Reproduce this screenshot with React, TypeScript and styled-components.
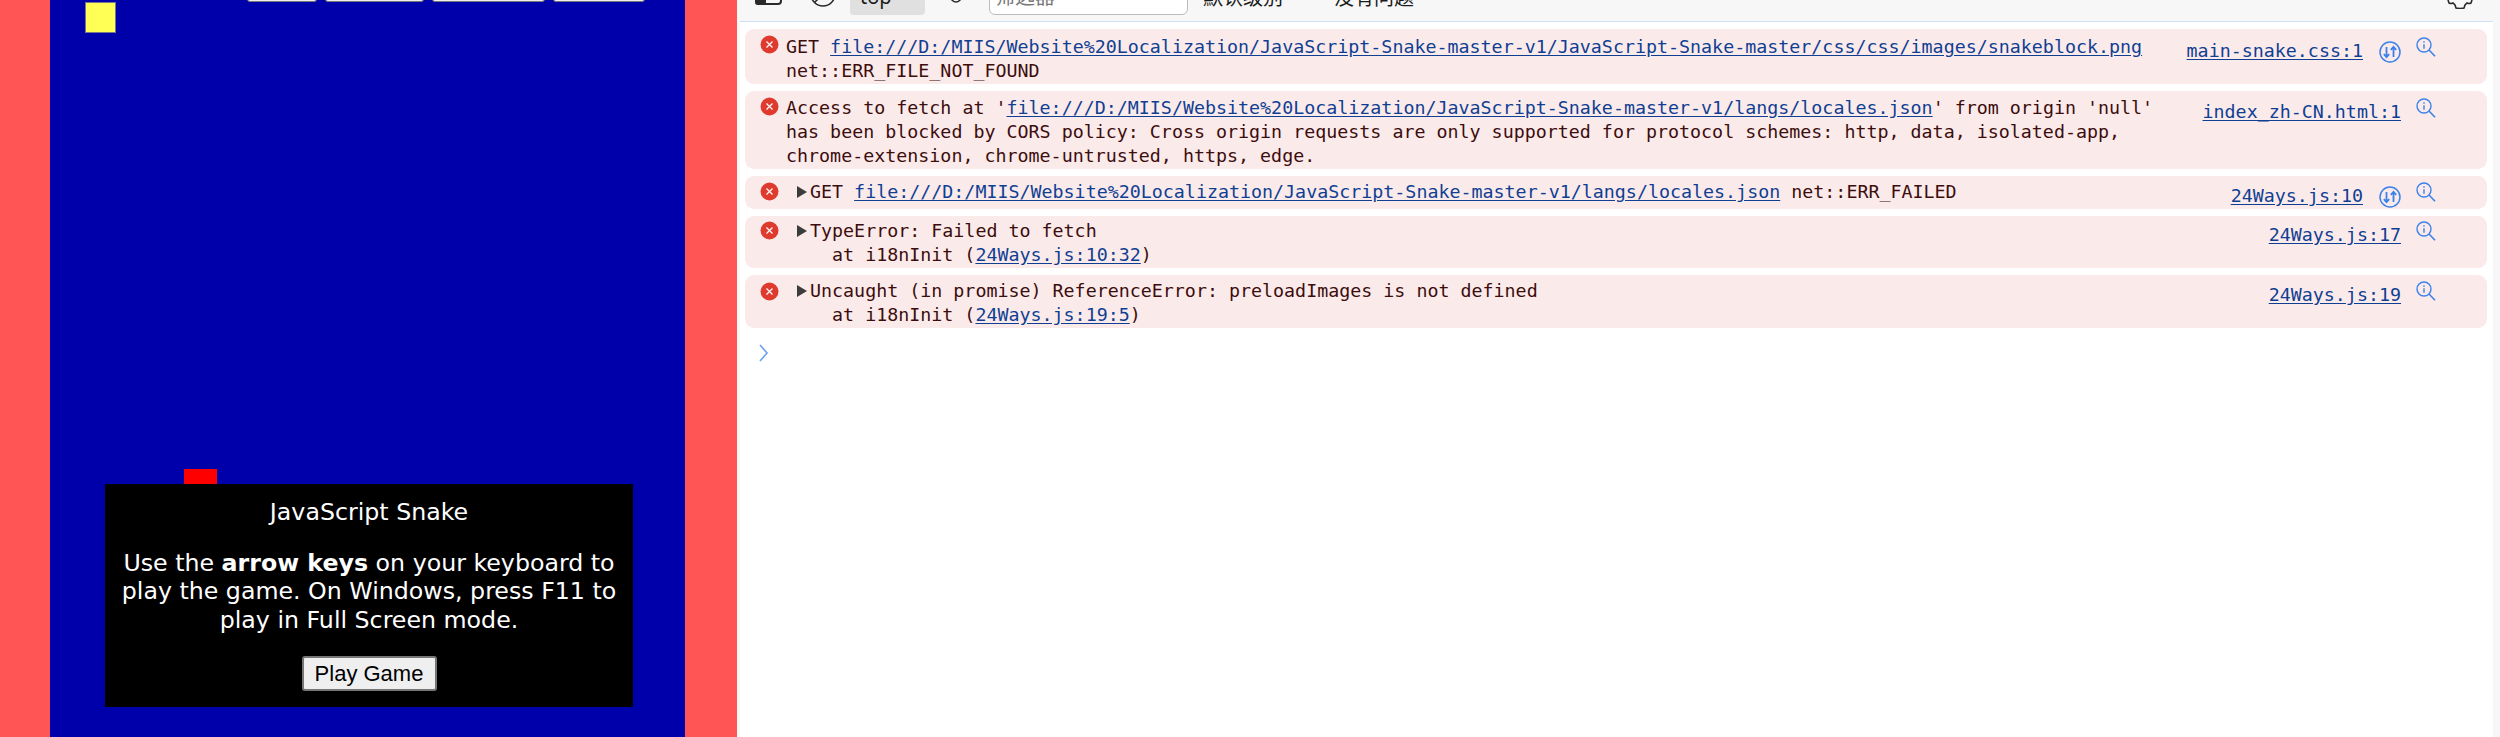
import React from "react";
import styled, { createGlobalStyle } from "styled-components";

const GlobalStyle = createGlobalStyle`
  html, body {
    margin: 0;
    padding: 0;
    background: #ffffff;
  }
`;

const Page = styled.div`
  display: flex;
  width: 2500px;
  height: 737px;
  overflow: hidden;
`;

const GamePane = styled.div`
  flex: none;
  box-sizing: border-box;
  width: 737px;
  height: 100%;
  padding: 0 52px 0 50px;
  background: #ff5555;
`;

const Playfield = styled.div`
  position: relative;
  height: 100%;
  background: #0000aa;
`;

const MenuBar = styled.div`
  display: flex;
  align-items: flex-end;
  gap: 8px;
  height: 2px;
  padding-left: 197px;
  overflow: hidden;
`;

const MenuButton = styled.div<{ $width: number }>`
  flex: none;
  box-sizing: border-box;
  width: ${(p) => p.$width}px;
  height: 30px;
  border: 1px solid #767676;
  border-radius: 3px;
  background: #efefef;
`;

const Block = styled.div<{ $x: number; $y: number; $w: number; $h: number; $color: string; $border?: boolean }>`
  position: absolute;
  box-sizing: border-box;
  left: ${(p) => p.$x}px;
  top: ${(p) => p.$y}px;
  width: ${(p) => p.$w}px;
  height: ${(p) => p.$h}px;
  background: ${(p) => p.$color};
  border: ${(p) => (p.$border ? "1px solid #77778a" : "none")};
`;

const WelcomeBox = styled.div`
  position: absolute;
  left: 55px;
  top: 484px;
  box-sizing: border-box;
  width: 528px;
  height: 223px;
  padding-top: 14px;
  background: #000000;
  color: #ffffff;
  font-family: "DejaVu Sans", Verdana, sans-serif;
  font-size: 23.7px;
  line-height: 28.5px;
  text-align: center;
`;

const WelcomeTitle = styled.div`
  margin-bottom: 22px;
`;

const WelcomeText = styled.div`
  margin-bottom: 22px;
`;

const PlayButton = styled.button`
  box-sizing: border-box;
  width: 135px;
  height: 35px;
  padding: 0;
  border: 2px solid #767676;
  border-radius: 3px;
  background: #efefef;
  color: #000000;
  font-family: "Liberation Sans", Arial, sans-serif;
  font-size: 22px;
`;

const DevTools = styled.div`
  flex: 1;
  display: flex;
  flex-direction: column;
  min-width: 0;
  padding: 0 7px 0 3px;
  background: #f7f7f7;
`;

const Toolbar = styled.div`
  flex: none;
  display: flex;
  align-items: flex-end;
  height: 21px;
  overflow: hidden;
  color: #1b1b1b;
  font-family: "Noto Sans CJK SC", sans-serif;
  font-size: 20px;
  line-height: 26px;
`;

const ToolIcon = styled.svg<{ $ml: number; $mb: number; $mr?: number }>`
  flex: none;
  margin-left: ${(p) => p.$ml}px;
  margin-right: ${(p) => p.$mr ?? 0}px;
  margin-bottom: ${(p) => p.$mb}px;
`;

const ContextSelect = styled.div`
  flex: none;
  box-sizing: border-box;
  width: 75px;
  height: 30px;
  margin-left: 14px;
  margin-bottom: 6px;
  padding-left: 10px;
  border-radius: 4px;
  background: #e0e0e0;
  font-family: "Noto Sans", sans-serif;
  line-height: 24px;
`;

const FilterInput = styled.div`
  flex: none;
  box-sizing: border-box;
  width: 199px;
  height: 30px;
  margin-left: 27px;
  margin-bottom: 6px;
  padding-left: 5px;
  border: 1.5px solid #bcbcbc;
  border-radius: 6px;
  background: #ffffff;
  color: #777777;
  line-height: 20px;
`;

const ToolLabel = styled.div<{ $ml: number }>`
  flex: none;
  margin-left: ${(p) => p.$ml}px;
  margin-bottom: 11px;
`;

const ToolSpacer = styled.div`
  flex: 1;
`;

const ConsoleBody = styled.div`
  flex: 1;
  display: flex;
  flex-direction: column;
  gap: 7px;
  padding: 7px 6px 0 5px;
  border-top: 1.5px solid #cfe0f7;
  background: #ffffff;
  font-family: "DejaVu Sans Mono", Consolas, monospace;
  font-size: 18.32px;
  line-height: 24px;
  color: #3c0d0d;
`;

const MessageRow = styled.div<{ $top: number }>`
  display: flex;
  align-items: flex-start;
  padding: ${(p) => p.$top}px 51px 1px 15px;
  border-radius: 9px;
  background: #fbeaea;
`;

const ErrorIcon = styled.svg<{ $dy: number }>`
  flex: none;
  margin: ${(p) => p.$dy}px 7px 0 0;
`;

const Disclosure = styled.span`
  flex: none;
  width: 0;
  height: 0;
  margin: 6px 3px 0 11px;
  border-top: 6px solid transparent;
  border-bottom: 6px solid transparent;
  border-left: 10px solid #3c3c3c;
`;

const MessageText = styled.div`
  flex: 1;
  min-width: 0;
  white-space: pre;
`;

const FileLink = styled.a`
  color: #0f3f93;
  text-decoration: underline;
  text-underline-offset: 2px;
`;

const SourceLink = styled(FileLink)`
  flex: none;
  margin-top: 4px;
`;

const SyncIcon = styled.svg`
  flex: none;
  margin: 6px 0 0 16px;
`;

const SearchIcon = styled.svg`
  flex: none;
  margin: 2px 0 0 15px;
`;

const Prompt = styled.svg`
  display: block;
  margin: 9px 0 0 13px;
`;

const RedCross = ({ dy = 2 }: { dy?: number }) => (
  <ErrorIcon $dy={dy} width="19" height="19" viewBox="0 0 19 19">
    <circle cx="9.5" cy="9.5" r="9" fill="#df3a2e" />
    <path d="M6.5 6.5l6 6M12.5 6.5l-6 6" stroke="#fff" strokeWidth="1.2" fill="none" />
  </ErrorIcon>
);

const SyncArrows = () => (
  <SyncIcon width="22" height="22" viewBox="0 0 22 22" fill="none" stroke="#3b82ea" strokeWidth="1.5">
    <circle cx="11" cy="11" r="10" />
    <path d="M7.5 6v10M4.8 13.2l2.7 2.9 2.7-2.9M14.5 16V6M11.8 8.8l2.7-2.9 2.7 2.9" strokeWidth="1.8" />
  </SyncIcon>
);

const Magnifier = () => (
  <SearchIcon width="20" height="20" viewBox="0 0 20 20" fill="none" stroke="#3b82ea" strokeWidth="1.4">
    <circle cx="8" cy="8" r="7" />
    <path d="M13 13l6 6.2" strokeWidth="1.6" />
    <path d="M8 4.2v1.6M8 7.2v4.6" />
  </SearchIcon>
);

const GameArea = () => (
  <GamePane>
    <Playfield>
      <MenuBar>
        <MenuButton $width={70} />
        <MenuButton $width={99} />
        <MenuButton $width={113} />
        <MenuButton $width={92} />
      </MenuBar>
      <Block $x={35} $y={2} $w={31} $h={31} $color="#ffff55" $border />
      <Block $x={134} $y={469} $w={33} $h={16} $color="#ff0000" />
      <WelcomeBox>
        <WelcomeTitle>JavaScript Snake</WelcomeTitle>
        <WelcomeText>
          Use the <b>arrow keys</b> on your keyboard to
          <br />
          play the game. On Windows, press F11 to
          <br />
          play in Full Screen mode.
        </WelcomeText>
        <PlayButton>Play Game</PlayButton>
      </WelcomeBox>
    </Playfield>
  </GamePane>
);

const ConsoleToolbar = () => (
  <Toolbar>
    <ToolIcon $ml={15} $mb={16} width="27" height="22" viewBox="0 0 27 22" fill="none" stroke="#2a2a2a" strokeWidth="2">
      <rect x="1" y="1" width="25" height="20" rx="3" />
      <rect x="1" y="1" width="9" height="20" rx="2" fill="#2a2a2a" />
    </ToolIcon>
    <ToolIcon $ml={28} $mb={14} width="26" height="26" viewBox="0 0 26 26" fill="none" stroke="#2a2a2a" strokeWidth="1.6">
      <circle cx="13" cy="13" r="12" />
      <path d="M4.5 21.5L21.5 4.5" />
    </ToolIcon>
    <ContextSelect>top</ContextSelect>
    <ToolIcon $ml={25} $mb={18} width="12" height="12" viewBox="0 0 12 12" fill="none" stroke="#2a2a2a" strokeWidth="1.6">
      <circle cx="6" cy="6" r="5" />
    </ToolIcon>
    <FilterInput>筛选器</FilterInput>
    <ToolLabel $ml={15}>默认级别</ToolLabel>
    <ToolLabel $ml={51}>没有问题</ToolLabel>
    <ToolSpacer />
    <ToolIcon $ml={0} $mb={12} $mr={20} width="26" height="26" viewBox="0 0 26 26" fill="none" stroke="#2a2a2a" strokeWidth="1.6">
      <path d="M1 17l1 3q2 1 4 0l2 2 1 3q4 1 8 0l1-3 2-2q2 1 4 0l1-3" />
    </ToolIcon>
  </Toolbar>
);

const ConsoleMessages = () => (
  <ConsoleBody>
    <MessageRow $top={6}>
      <RedCross dy={0} />
      <MessageText>
        GET{" "}
        <FileLink>file:///D:/MIIS/Website%20Localization/JavaScript-Snake-master-v1/JavaScript-Snake-master/css/css/images/snakeblock.png</FileLink>
        {"\n"}net::ERR_FILE_NOT_FOUND
      </MessageText>
      <SourceLink>main-snake.css:1</SourceLink>
      <SyncArrows />
      <Magnifier />
    </MessageRow>
    <MessageRow $top={5}>
      <RedCross dy={1} />
      <MessageText>
        Access to fetch at '
        <FileLink>file:///D:/MIIS/Website%20Localization/JavaScript-Snake-master-v1/langs/locales.json</FileLink>
        ' from origin 'null'
        {"\n"}has been blocked by CORS policy: Cross origin requests are only supported for protocol schemes: http, data, isolated-app,
        {"\n"}chrome-extension, chrome-untrusted, https, edge.
      </MessageText>
      <SourceLink>index_zh-CN.html:1</SourceLink>
      <Magnifier />
    </MessageRow>
    <MessageRow $top={4}>
      <RedCross />
      <Disclosure />
      <MessageText>
        GET{" "}
        <FileLink>file:///D:/MIIS/Website%20Localization/JavaScript-Snake-master-v1/langs/locales.json</FileLink>
        {" "}net::ERR_FAILED
      </MessageText>
      <SourceLink>24Ways.js:10</SourceLink>
      <SyncArrows />
      <Magnifier />
    </MessageRow>
    <MessageRow $top={3}>
      <RedCross />
      <Disclosure />
      <MessageText>
        TypeError: Failed to fetch
        {"\n"}  at i18nInit (<FileLink>24Ways.js:10:32</FileLink>)
      </MessageText>
      <SourceLink>24Ways.js:17</SourceLink>
      <Magnifier />
    </MessageRow>
    <MessageRow $top={4}>
      <RedCross dy={3} />
      <Disclosure />
      <MessageText>
        Uncaught (in promise) ReferenceError: preloadImages is not defined
        {"\n"}  at i18nInit (<FileLink>24Ways.js:19:5</FileLink>)
      </MessageText>
      <SourceLink>24Ways.js:19</SourceLink>
      <Magnifier />
    </MessageRow>
    <Prompt width="11" height="18" viewBox="0 0 11 18" fill="none" stroke="#6ba1ef" strokeWidth="1.6">
      <path d="M2 1l7 8-7 8" />
    </Prompt>
  </ConsoleBody>
);

export default function App() {
  return (
    <Page>
      <GlobalStyle />
      <GameArea />
      <DevTools>
        <ConsoleToolbar />
        <ConsoleMessages />
      </DevTools>
    </Page>
  );
}
